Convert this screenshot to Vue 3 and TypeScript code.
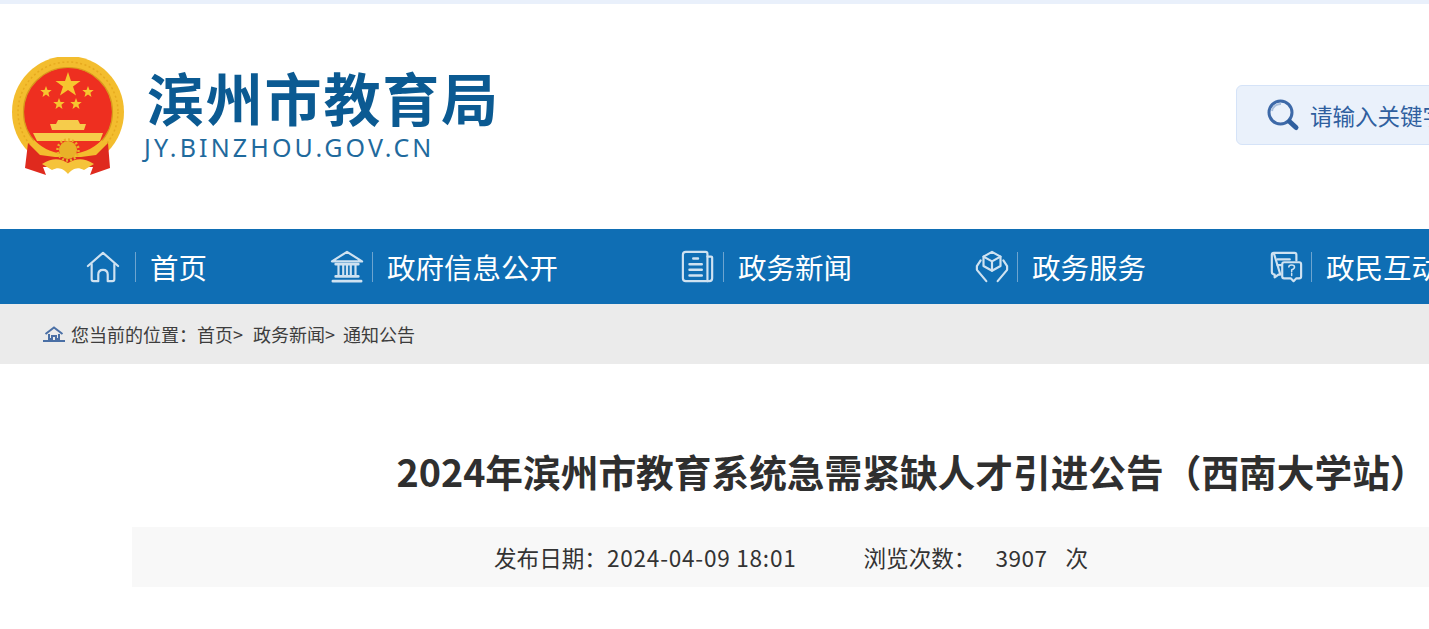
<script setup lang="ts">
const nav = [
  { key: 'home', label: '首页' },
  { key: 'gov', label: '政府信息公开' },
  { key: 'news', label: '政务新闻' },
  { key: 'service', label: '政务服务' },
  { key: 'talk', label: '政民互动' },
]
</script>

<template>
  <div class="page">
    <div class="strip"></div>
    <header class="head">
      <svg class="emblem" viewBox="12 17 113 121" width="113" height="121">
        <circle cx="68" cy="72" r="56" fill="#f3bd2e" />
        <circle cx="68" cy="72" r="50" fill="none" stroke="#e6a91f" stroke-width="1.500" stroke-dasharray="2 2.500" />
        <circle cx="68" cy="72" r="44.500" fill="#ee2f20" />
        <circle cx="68" cy="72" r="44.500" fill="none" stroke="#d99a1c" stroke-width="1.200" />
        <path d="M68 32 L71 41 L80.500 41 L73 46.500 L76 55.500 L68 50 L60 55.500 L63 46.500 L55.500 41 L65 41 Z" fill="#f7c52f" />
        <path v-for="s in [[46, 52], [88, 52], [59, 64], [76, 64]]" :key="s[0]" :transform="`translate(${s[0]} ${s[1]})`" d="M0 -6 L1.500 -2 L5.700 -1.900 L2.400 .8 L3.500 5 L0 2.500 L-3.500 5 L-2.400 .8 L-5.700 -1.900 L-1.500 -2 Z" fill="#f7c52f" />
        <path d="M58 80 H78 L80 84 H86 L84 90 H52 L50 84 H56 Z M33 93 H103 L100 101 H37 Z" fill="#f6cc4b" />
        <path d="M34 100 Q48 114 68 114 Q88 114 102 100 L108 108 Q90 122 68 122 Q46 122 28 108 Z" fill="#f3bd2e" />
        <path d="M28 103 L40 115 L55 117 L81 117 L96 115 L108 103 L110 128 L90 135 L93 127 L43 127 L46 135 L25 128 Z" fill="#df2a1e" />
        <circle cx="68" cy="110" r="9" fill="#e9b128" />
        <circle cx="68" cy="110" r="10.500" fill="none" stroke="#e9b128" stroke-width="2.500" stroke-dasharray="2 2.100" />
        <path d="M42 124 C54 117 60 119 68 123 C76 119 82 117 94 124 L84 130 C76 126 72 130 68 134 C64 130 60 126 52 130 Z" fill="#f5c33a" />
      </svg>
      <div class="brand">
        <div class="brand-cn">滨州市教育局</div>
        <div class="brand-en">JY.BINZHOU.GOV.CN</div>
      </div>
      <div class="search">
        <svg class="search-icon" viewBox="0 0 34 34" width="34" height="34">
          <circle cx="14.500" cy="14.500" r="11.500" fill="none" stroke="#3d69a8" stroke-width="3" />
          <path d="M6 13 A8.500 8.500 0 0 1 15 6" fill="none" stroke="#a9bfdc" stroke-width="2" />
          <path d="M23.500 23.500 L30 29.500" stroke="#2f5f9f" stroke-width="5" stroke-linecap="round" />
        </svg>
        <span>请输入关键字</span>
      </div>
    </header>

    <nav class="nav">
      <a v-for="item in nav" :key="item.key" class="nav-item" :class="`nav-item-${item.key}`">
        <svg class="nav-icon" viewBox="0 0 36 36" width="34" height="34">
          <g v-if="item.key === 'home'">
            <path d="M2 17 L18 3 L34 17" />
            <path d="M6 15 V31 Q6 33 8 33 H13 V26 Q13 21 18 21 Q23 21 23 26 V33 H28 Q30 33 30 31 V15" />
          </g>
          <g v-else-if="item.key === 'gov'">
            <path d="M2 12 L18 2 L34 12 Z" />
            <path d="M6 15 H30 M6 28 H30 M3 33 H33" stroke-width="2.800" />
            <path d="M9 16 V27 M14 16 V27 M18 16 V27 M22 16 V27 M27 16 V27" />
          </g>
          <g v-else-if="item.key === 'news'">
            <path d="M5 2 H26 Q28 2 28 4 V33 H5 Q2 33 2 30 V5 Q2 2 5 2 Z" />
            <path d="M28 7 H32 Q33 7 33 8 V30 Q33 33 30 33 H28" />
            <path d="M13 9 H18 M9 15 H22 M9 21 H22 M9 27 H22" stroke-width="2.600" />
          </g>
          <g v-else-if="item.key === 'service'">
            <path d="M18 2 L27 7 V17 L18 22 L9 17 V7 Z" />
            <path d="M9 7 L18 12 L27 7 M18 12 V22" />
            <path d="M6 11 L2 17 V21 L12 33 M30 11 L34 17 V21 L24 33" />
          </g>
          <g v-else>
            <path d="M5 3 H27 Q29 3 29 5 V11 M12 26 H10 L6 29 V26 Q3 26 3 23 V5 Q3 3 5 3 Z" />
            <path d="M9 10 H22 M9 16 H13" />
            <path d="M16 13 H32 Q34 13 34 15 V28 Q34 30 32 30 H29 L26 33 L23 30 H16 Q14 30 14 28 V15 Q14 13 16 13 Z" />
            <path d="M21 18 Q21 16 24 16 Q27 16 27 18 Q27 20 24 21 V23 M24 25 V27" stroke-width="1.600" />
          </g>
        </svg>
        <span class="nav-sep"></span>
        <span class="nav-label">{{ item.label }}</span>
      </a>
    </nav>

    <div class="crumbs">
      <svg class="crumb-icon" viewBox="0 0 22 16" width="22" height="16">
        <path d="M2.500 8 L11 1.500 L19.500 8" fill="none" stroke="#4a6fa5" stroke-width="2" />
        <path d="M6 8 V13 H9 V10 H13 V13 H16 V8" fill="none" stroke="#4a6fa5" stroke-width="2" />
        <path d="M0 15 H22" stroke="#4a6fa5" stroke-width="2" />
      </svg>
      <span>您当前的位置：</span>
      <span class="crumb">首页&gt;</span>
      <span class="crumb crumb-mid">政务新闻&gt;</span>
      <span class="crumb crumb-last">通知公告</span>
    </div>

    <main class="article">
      <h1 class="title">2024年滨州市教育系统急需紧缺人才引进公告（西南大学站）</h1>
      <div class="meta">
        <span>发布日期：<span class="stamp">2024-04-09 18:01</span></span>
        <span class="views">浏览次数：</span>
        <span class="count">3907</span>
        <span class="unit">次</span>
      </div>
    </main>
  </div>
</template>

<style>
html, body { margin: 0; overflow: hidden; background: #fff; }
</style>

<style scoped>
.page {
  width: 1429px;
  height: 629px;
  overflow: hidden;
  background: #fff;
  font-family: "Noto Sans CJK SC", "Noto Sans", sans-serif;
}
.strip { height: 4px; background: #e9f0fb; }
.head {
  height: 225px;
  display: flex;
  align-items: flex-start;
}
.emblem { flex: none; margin: 53px 0 0 12px; }
.brand { flex: none; width: 1024px; margin: 0 0 0 19px; }
.brand-cn {
  margin: 57px 0 0 3px;
  font-size: 57px;
  line-height: 70px;
  font-weight: 700;
  letter-spacing: 1.800px;
  color: #0b5a92;
  white-space: nowrap;
}
.brand-en {
  margin-top: 1px;
  font-family: "Noto Sans", sans-serif;
  font-size: 25px;
  line-height: 30px;
  letter-spacing: 3.150px;
  color: #1f6a9d;
  white-space: nowrap;
}
.search {
  flex: none;
  width: 400px;
  height: 58px;
  margin-top: 81px;
  margin-left: 68px;
  display: flex;
  align-items: center;
  gap: 10px;
  padding-left: 29px;
  background: #eaf1fb;
  border: 1px solid #d5e3f8;
  border-radius: 6px;
  font-size: 22.500px;
  color: #2f5f9f;
  white-space: nowrap;
}
.search-icon { flex: none; }
.nav {
  height: 75px;
  background: #0f6eb4;
  display: flex;
  align-items: center;
  gap: 123px;
  padding-left: 86px;
  white-space: nowrap;
}
.nav-item { display: flex; align-items: center; flex: none; color: #fff; }
.nav-icon {
  flex: none;
  fill: none;
  stroke: #cfe2f1;
  stroke-width: 2.300;
  stroke-linejoin: round;
  stroke-linecap: round;
}
.nav-sep {
  flex: none;
  width: 1px;
  height: 30px;
  margin: 0 14px 0 8px;
  background: #6da4cf;
}
.nav-item-home .nav-sep { margin-left: 15px; }
.nav-label { font-size: 28.500px; line-height: 40px; }
.crumbs {
  height: 60px;
  background: #ebebeb;
  display: flex;
  align-items: center;
  padding-left: 43px;
  font-size: 18px;
  color: #3d3d3d;
  white-space: nowrap;
}
.crumb-icon { flex: none; margin-right: 6px; }
.crumb-mid { margin-left: 10px; }
.crumb-last { margin-left: 8px; }
.article { width: 1552px; margin-left: 132px; }
.title {
  margin: 81px 0 0;
  padding-left: 8px;
  text-align: center;
  font-size: 37.700px;
  line-height: 52px;
  font-weight: 700;
  color: #2f2f2f;
  white-space: nowrap;
}
.meta {
  margin-top: 30px;
  height: 60px;
  background: #f8f8f8;
  display: flex;
  align-items: center;
  padding-left: 362px;
  font-size: 22.600px;
  color: #333;
  white-space: nowrap;
}
.stamp { letter-spacing: .75px; }
.views { margin-left: 67px; }
.count { margin-left: 19px; letter-spacing: .5px; }
.unit { margin-left: 18px; }
</style>
